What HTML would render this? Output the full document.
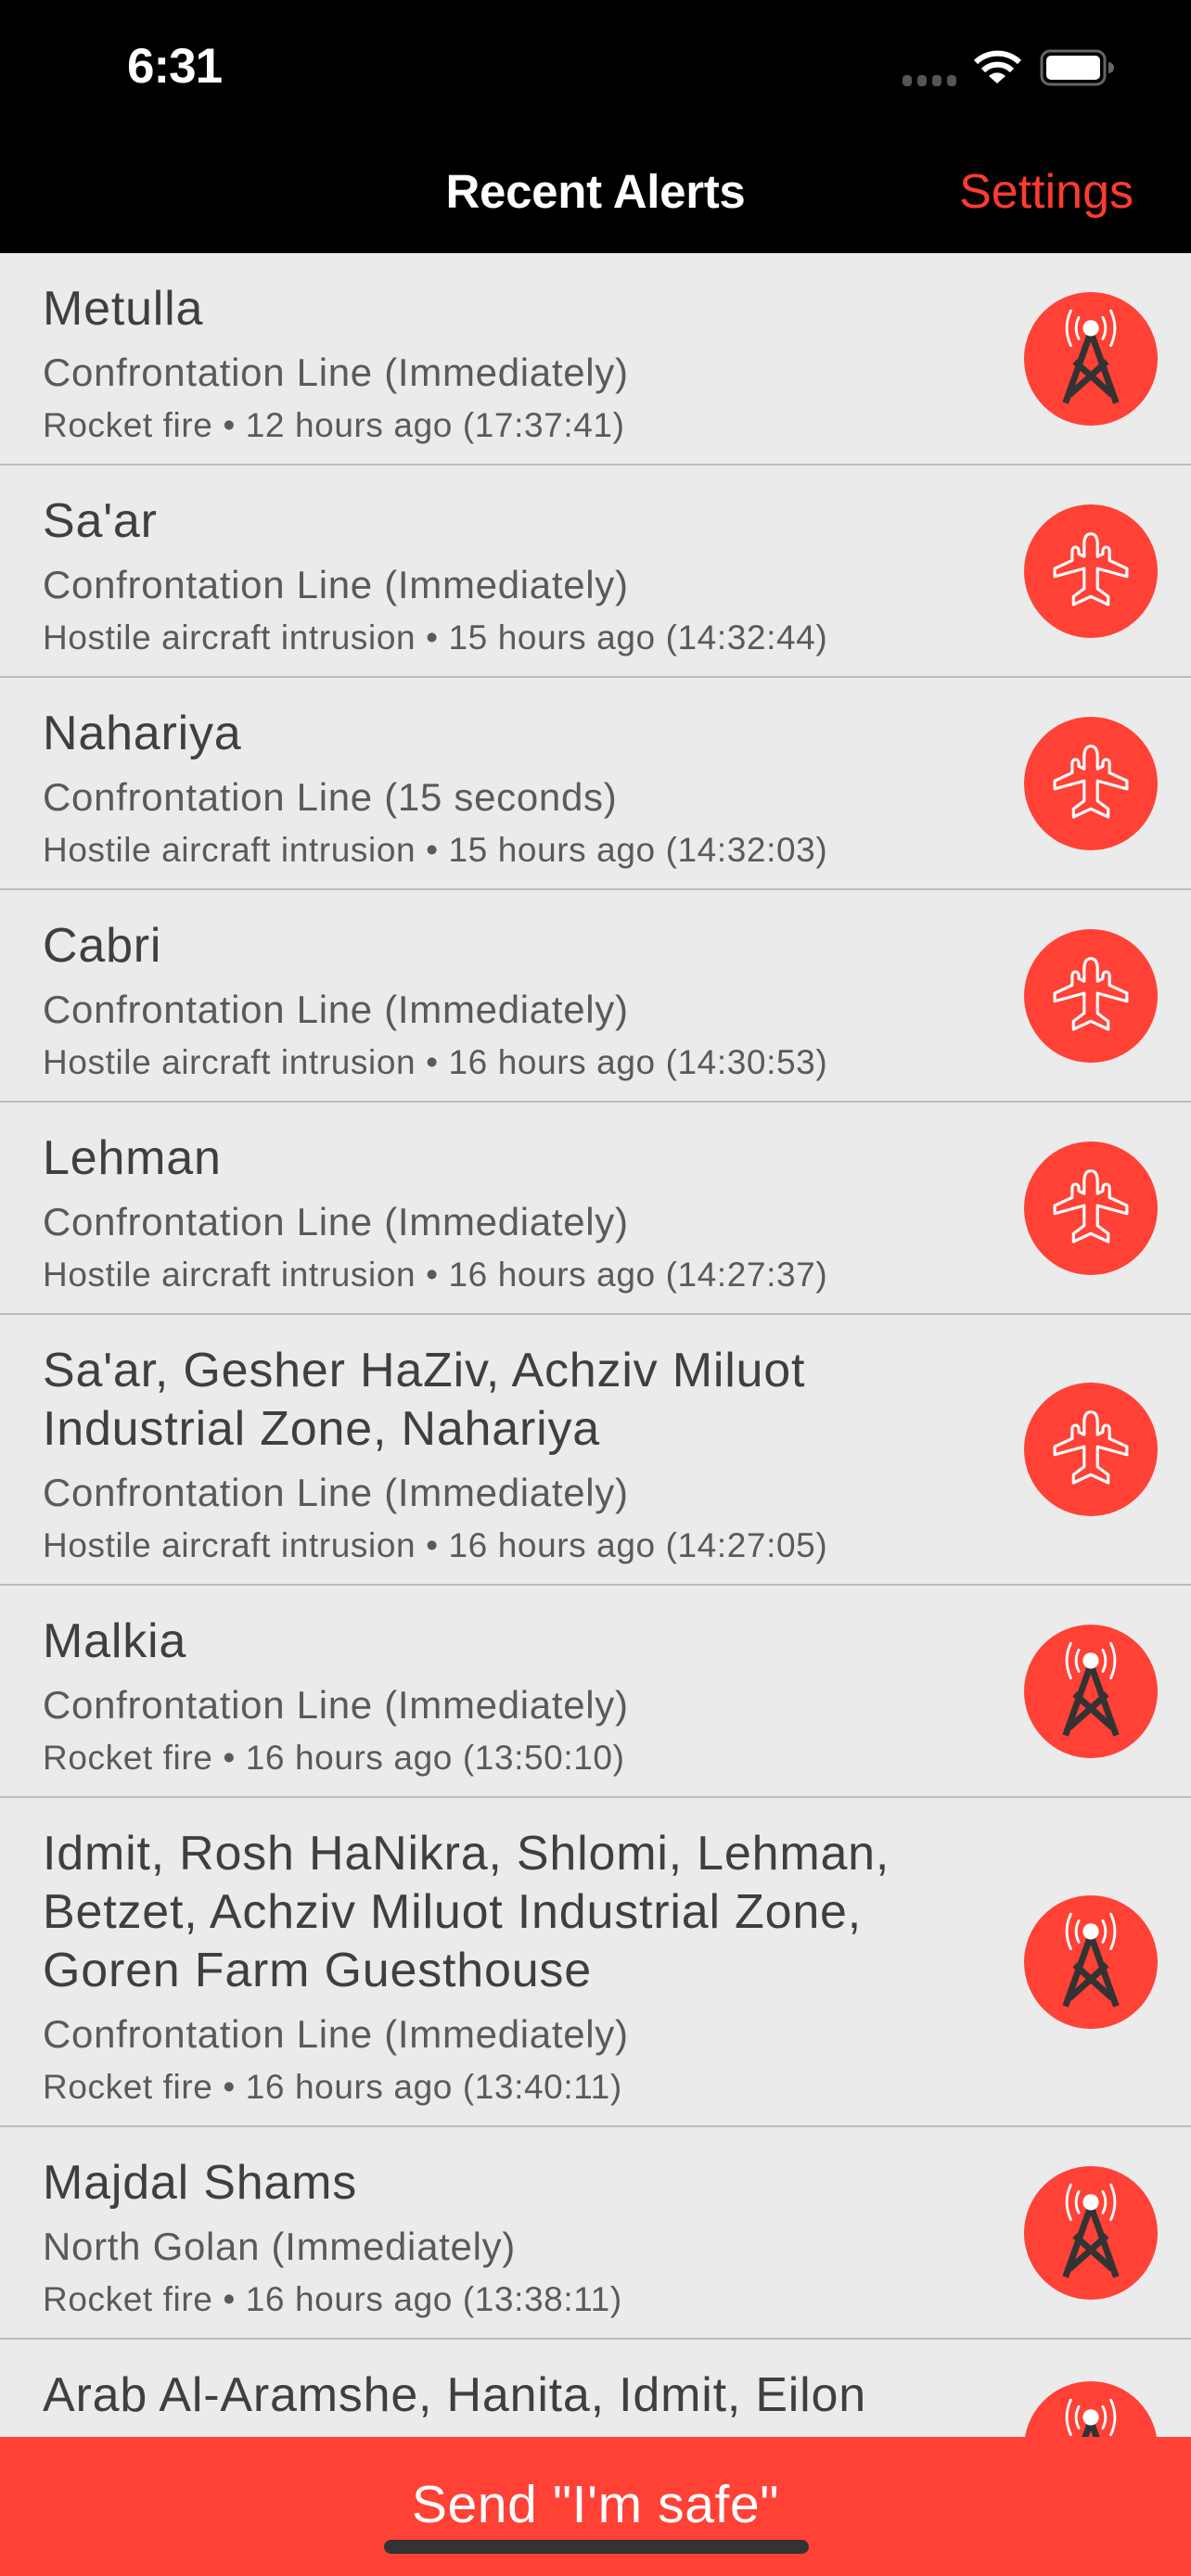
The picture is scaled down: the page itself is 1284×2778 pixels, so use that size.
<!DOCTYPE html>
<html><head><meta charset="utf-8">
<style>
*{margin:0;padding:0;box-sizing:border-box}
body{width:1284px;height:2778px;overflow:hidden;background:#ebebeb;font-family:"Liberation Sans",Arial,sans-serif;position:relative}
.hdr{position:absolute;left:0;top:0;width:1284px;height:273px;background:#000}
.time{position:absolute;left:137px;top:41px;color:#fff;font-size:53px;font-weight:bold;letter-spacing:-1px}
.ttl{position:absolute;left:0;width:1284px;text-align:center;top:177px;color:#fff;font-size:51px;font-weight:bold;letter-spacing:-0.3px}
.set{position:absolute;right:62px;top:177px;color:#ff3b30;font-size:52px}
.list{position:absolute;top:273px;left:0;width:1284px}
.row{position:relative;padding:29px 150px 16px 46px;border-bottom:2px solid #bdbdbd;color:#444}
.t{font-size:52px;line-height:63px;color:#3f3f3f;letter-spacing:0.8px;white-space:nowrap}
.s{font-size:42px;line-height:60px;margin-top:7px;color:#5a5a5a;white-space:nowrap;letter-spacing:0.7px}
.m{font-size:37px;line-height:50px;margin-top:2px;color:#5a5a5a;white-space:nowrap;letter-spacing:0.6px}
.ic{position:absolute;right:36px;top:50%;margin-top:-72px;width:144px;height:144px}
.bar{position:absolute;left:0;top:2628px;width:1284px;height:150px;background:#ff4136}
.bar .txt{position:absolute;top:40px;width:1284px;text-align:center;color:#fff;font-size:57px;letter-spacing:0.6px}
.home{position:absolute;left:414px;top:2739px;width:458px;height:15px;border-radius:8px;background:#333}
</style></head><body>
<svg width="0" height="0" style="position:absolute">
<defs>
<symbol id="tower" viewBox="-50 -50 100 100">
<circle cx="0" cy="0" r="50" fill="#ff4136"/>
<g stroke="#333" stroke-width="4.8" fill="none" stroke-linecap="butt">
<path d="M0,-20 L-19,33 M0,-20 L19,33 M-12,2 L16,27 M12,2 L-16,27"/>
</g>
<circle cx="0" cy="-23" r="6" fill="#fff"/>
<g stroke="#fff" stroke-width="2" fill="none" stroke-linecap="round">
<path d="M-9,-31 Q-13,-23 -9,-15 M9,-31 Q13,-23 9,-15 M-15,-36 Q-21,-23 -15,-10 M15,-36 Q21,-23 15,-10"/>
</g>
</symbol>
<symbol id="plane" viewBox="-50 -50 100 100">
<circle cx="0" cy="0" r="50" fill="#ff4136"/>
<path d="M0,-28 C4,-28 5,-24 5,-20 L5,-11 L9,-13 L9,-15 C9,-19 14,-19 14,-15 L14,-8 L27,-2 L27,4 L5,-2 L5,13 L13,19 L13,25 L0,19 L-13,25 L-13,19 L-5,13 L-5,-2 L-27,4 L-27,-2 L-14,-8 L-14,-15 C-14,-19 -9,-19 -9,-15 L-9,-13 L-5,-11 L-5,-20 C-5,-24 -4,-28 0,-28 Z" fill="none" stroke="#fff" stroke-width="2.2" stroke-linejoin="round"/>
</symbol>
</defs></svg>

<div class="hdr">
<div class="time">6:31</div>
<svg style="position:absolute;left:970px;top:50px" width="240" height="46" viewBox="970 50 240 46">
<g fill="#555"><rect x="973" y="81" width="10" height="12" rx="4"/><rect x="989" y="81" width="10" height="12" rx="4"/><rect x="1005" y="81" width="10" height="12" rx="4"/><rect x="1021" y="81" width="10" height="12" rx="4"/></g>
<g fill="none" stroke="#fff" stroke-width="6" stroke-linecap="butt">
<path d="M1052,67 A34,34 0 0 1 1099,67"/>
<path d="M1060,76 A22,22 0 0 1 1091,76"/>
</g>
<path d="M1075,90 L1066,82 A13,13 0 0 1 1084,82 Z" fill="#fff"/>
<rect x="1123" y="55" width="68" height="36" rx="9" fill="none" stroke="#666" stroke-width="3"/>
<rect x="1128" y="60" width="58" height="26" rx="5" fill="#fff"/>
<path d="M1195,67 a6,6 0 0 1 0,12 Z" fill="#666"/>
</svg>
<div class="ttl">Recent Alerts</div>
<div class="set">Settings</div>
</div>

<div class="list">
<div class="row"><div class="t">Metulla</div><div class="s">Confrontation Line (Immediately)</div><div class="m">Rocket fire • 12 hours ago (17:37:41)</div><svg class="ic"><use href="#tower"/></svg></div>
<div class="row"><div class="t">Sa'ar</div><div class="s">Confrontation Line (Immediately)</div><div class="m">Hostile aircraft intrusion • 15 hours ago (14:32:44)</div><svg class="ic"><use href="#plane"/></svg></div>
<div class="row"><div class="t">Nahariya</div><div class="s">Confrontation Line (15 seconds)</div><div class="m">Hostile aircraft intrusion • 15 hours ago (14:32:03)</div><svg class="ic"><use href="#plane"/></svg></div>
<div class="row"><div class="t">Cabri</div><div class="s">Confrontation Line (Immediately)</div><div class="m">Hostile aircraft intrusion • 16 hours ago (14:30:53)</div><svg class="ic"><use href="#plane"/></svg></div>
<div class="row"><div class="t">Lehman</div><div class="s">Confrontation Line (Immediately)</div><div class="m">Hostile aircraft intrusion • 16 hours ago (14:27:37)</div><svg class="ic"><use href="#plane"/></svg></div>
<div class="row"><div class="t">Sa'ar, Gesher HaZiv, Achziv Miluot<br>Industrial Zone, Nahariya</div><div class="s">Confrontation Line (Immediately)</div><div class="m">Hostile aircraft intrusion • 16 hours ago (14:27:05)</div><svg class="ic"><use href="#plane"/></svg></div>
<div class="row"><div class="t">Malkia</div><div class="s">Confrontation Line (Immediately)</div><div class="m">Rocket fire • 16 hours ago (13:50:10)</div><svg class="ic"><use href="#tower"/></svg></div>
<div class="row"><div class="t">Idmit, Rosh HaNikra, Shlomi, Lehman,<br>Betzet, Achziv Miluot Industrial Zone,<br>Goren Farm Guesthouse</div><div class="s">Confrontation Line (Immediately)</div><div class="m">Rocket fire • 16 hours ago (13:40:11)</div><svg class="ic"><use href="#tower"/></svg></div>
<div class="row"><div class="t">Majdal Shams</div><div class="s">North Golan (Immediately)</div><div class="m">Rocket fire • 16 hours ago (13:38:11)</div><svg class="ic"><use href="#tower"/></svg></div>
<div class="row" style="border-bottom:none"><div class="t">Arab Al-Aramshe, Hanita, Idmit, Eilon</div><div class="s">Confrontation Line (Immediately)</div><div class="m">Rocket fire • 16 hours ago (13:38:11)</div><svg class="ic" style="top:45px;margin-top:0"><use href="#tower"/></svg></div>
</div>

<div class="bar"><div class="txt">Send "I'm safe"</div></div>
<div class="home"></div>
</body></html>
